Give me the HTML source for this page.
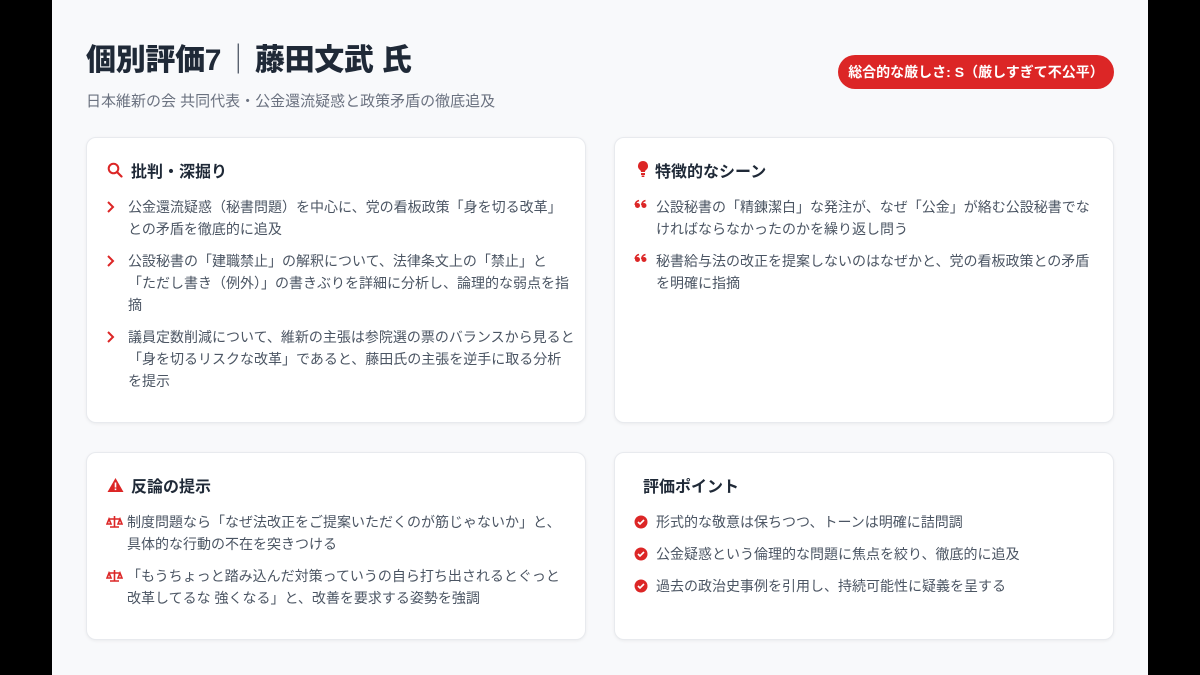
<!DOCTYPE html>
<html><head><meta charset="utf-8"><style>
*{margin:0;padding:0;box-sizing:border-box}
body{width:1200px;height:675px;background:#000;font-family:"Liberation Sans","Noto Sans CJK JP",sans-serif;overflow:hidden}
.page{position:absolute;left:52px;top:0;width:1096px;height:675px;background:#f8f9fb}
h1{position:absolute;left:34px;top:35px;font-size:30px;font-weight:900;color:#1f2937;letter-spacing:-0.3px}
.sub{position:absolute;left:34px;top:90px;font-size:15px;color:#6b7280}
.badge{position:absolute;left:786px;top:55px;width:276px;height:34px;border-radius:17px;background:#dc2626;color:#fff;font-size:14px;font-weight:700;text-align:center;line-height:34px}
.card{position:absolute;background:#fff;border:1px solid #e8eaee;border-radius:10px;box-shadow:0 1px 3px rgba(0,0,0,.06)}
.card h2{position:absolute;left:44px;top:20px;font-size:16px;font-weight:700;color:#1f2937}
.ic{position:absolute;left:20px;top:24px}
ul{list-style:none;position:absolute;left:41px;top:58px;right:6px}
li{position:relative;font-size:14px;line-height:22px;color:#4b5563;margin-bottom:10px;white-space:nowrap}
li .m{position:absolute;left:-22px;top:0;color:#dc2626}
</style></head><body><div class="page">
<h1>個別評価7<span style="font-weight:300;color:#374151;margin:0 2px">｜</span>藤田文武 氏</h1>
<div class="sub">日本維新の会 共同代表・公金還流疑惑と政策矛盾の徹底追及</div>
<div class="badge">総合的な厳しさ: S（厳しすぎて不公平）</div>

<div class="card" style="left:34px;top:137px;width:500px;height:286px">
<svg class="ic" width="16" height="16" viewBox="0 0 16 16"><circle cx="6.5" cy="6.5" r="4.8" fill="none" stroke="#dc2626" stroke-width="2"/><path d="M10 10l4.5 4.5" stroke="#dc2626" stroke-width="2.2" stroke-linecap="round"/></svg>
<h2>批判・深掘り</h2>
<ul>
<li><span class="m"><svg width="10" height="22" viewBox="0 0 10 22"><path d="M2 6l5 5-5 5" fill="none" stroke="#dc2626" stroke-width="2"/></svg></span>公金還流疑惑（秘書問題）を中心に、党の看板政策「身を切る改革」<br>との矛盾を徹底的に追及</li>
<li><span class="m"><svg width="10" height="22" viewBox="0 0 10 22"><path d="M2 6l5 5-5 5" fill="none" stroke="#dc2626" stroke-width="2"/></svg></span>公設秘書の「建職禁止」の解釈について、法律条文上の「禁止」と<br>「ただし書き（例外）」の書きぶりを詳細に分析し、論理的な弱点を指<br>摘</li>
<li><span class="m"><svg width="10" height="22" viewBox="0 0 10 22"><path d="M2 6l5 5-5 5" fill="none" stroke="#dc2626" stroke-width="2"/></svg></span>議員定数削減について、維新の主張は参院選の票のバランスから見ると<br>「身を切るリスクな改革」であると、藤田氏の主張を逆手に取る分析<br>を提示</li>
</ul></div>

<div class="card" style="left:562px;top:137px;width:500px;height:286px">
<svg class="ic" width="16" height="18" viewBox="0 0 16 18" style="top:22px"><path d="M8 1a5 5 0 0 0-3 9c.6.5 1 1.2 1 2h4c0-.8.4-1.5 1-2a5 5 0 0 0-3-9z" fill="#dc2626"/><rect x="6" y="13" width="4" height="2" fill="#dc2626"/><rect x="6.5" y="15.5" width="3" height="1.5" rx=".7" fill="#dc2626"/></svg>
<h2 style="left:40px">特徴的なシーン</h2>
<ul>
<li><span class="m"><svg width="14" height="22" viewBox="0 0 14 22"><circle cx="3.5" cy="9.5" r="2.5" fill="#dc2626"/><circle cx="10" cy="9.5" r="2.5" fill="#dc2626"/><path d="M1.2 9C1.5 6 3 5 5 4.5M7.7 9C8 6 9.5 5 11.5 4.5" fill="none" stroke="#dc2626" stroke-width="1.6"/></svg></span>公設秘書の「精錬潔白」な発注が、なぜ「公金」が絡む公設秘書でな<br>ければならなかったのかを繰り返し問う</li>
<li><span class="m"><svg width="14" height="22" viewBox="0 0 14 22"><circle cx="3.5" cy="9.5" r="2.5" fill="#dc2626"/><circle cx="10" cy="9.5" r="2.5" fill="#dc2626"/><path d="M1.2 9C1.5 6 3 5 5 4.5M7.7 9C8 6 9.5 5 11.5 4.5" fill="none" stroke="#dc2626" stroke-width="1.6"/></svg></span>秘書給与法の改正を提案しないのはなぜかと、党の看板政策との矛盾<br>を明確に指摘</li>
</ul></div>

<div class="card" style="left:34px;top:452px;width:500px;height:188px">
<svg class="ic" width="17" height="16" viewBox="0 0 17 16"><path d="M8.5 1L16.5 15H.5z" fill="#dc2626"/><rect x="7.7" y="5.5" width="1.6" height="5" fill="#fff"/><rect x="7.7" y="11.5" width="1.6" height="1.6" fill="#fff"/></svg>
<h2>反論の提示</h2>
<ul style="left:40px">
<li><span class="m" style="left:-21px"><svg width="17" height="22" viewBox="0 0 17 22"><path d="M8.5 5v11M3 8h11M1 13l2-5 2 5zM12 13l2-5 2 5zM1 13h4M12 13h4M4 16h9" fill="none" stroke="#dc2626" stroke-width="1.6"/></svg></span>制度問題なら「なぜ法改正をご提案いただくのが筋じゃないか」と、<br>具体的な行動の不在を突きつける</li>
<li><span class="m" style="left:-21px"><svg width="17" height="22" viewBox="0 0 17 22"><path d="M8.5 5v11M3 8h11M1 13l2-5 2 5zM12 13l2-5 2 5zM1 13h4M12 13h4M4 16h9" fill="none" stroke="#dc2626" stroke-width="1.6"/></svg></span>「もうちょっと踏み込んだ対策っていうの自ら打ち出されるとぐっと<br>改革してるな 強くなる」と、改善を要求する姿勢を強調</li>
</ul></div>

<div class="card" style="left:562px;top:452px;width:500px;height:188px">
<h2 style="left:28px">評価ポイント</h2>
<ul style="left:41px">
<li style="margin-bottom:10px"><span class="m"><svg width="14" height="22" viewBox="0 0 14 22"><circle cx="7" cy="11" r="6.5" fill="#dc2626"/><path d="M4 11l2 2 4-4" fill="none" stroke="#fff" stroke-width="1.6"/></svg></span>形式的な敬意は保ちつつ、トーンは明確に詰問調</li>
<li style="margin-bottom:10px"><span class="m"><svg width="14" height="22" viewBox="0 0 14 22"><circle cx="7" cy="11" r="6.5" fill="#dc2626"/><path d="M4 11l2 2 4-4" fill="none" stroke="#fff" stroke-width="1.6"/></svg></span>公金疑惑という倫理的な問題に焦点を絞り、徹底的に追及</li>
<li><span class="m"><svg width="14" height="22" viewBox="0 0 14 22"><circle cx="7" cy="11" r="6.5" fill="#dc2626"/><path d="M4 11l2 2 4-4" fill="none" stroke="#fff" stroke-width="1.6"/></svg></span>過去の政治史事例を引用し、持続可能性に疑義を呈する</li>
</ul></div>
</div></body></html>
